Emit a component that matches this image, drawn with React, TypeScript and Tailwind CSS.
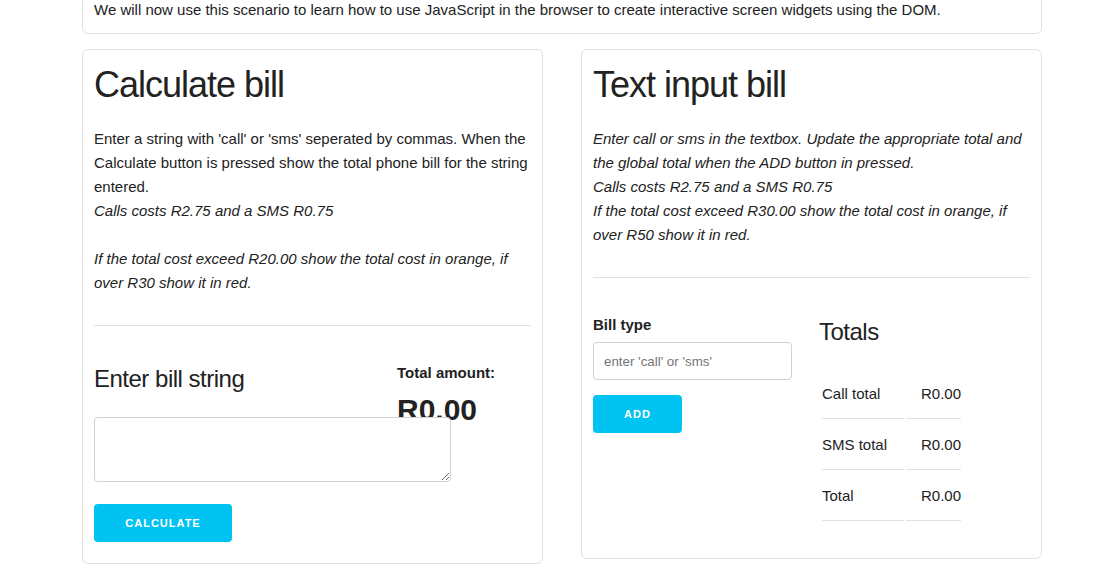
import React from "react";

function PrimaryButton({ label, width }: { label: string; width: string }) {
  return (
    <button
      type="button"
      className={`${width} h-[38px] rounded-[4px] bg-[#00c3f2] text-white text-[11px] font-bold uppercase tracking-[1px] leading-[38px] text-center`}
    >
      {label}
    </button>
  );
}

export default function App() {
  return (
    <div className="min-h-screen bg-white text-[15px] leading-[24px] text-[#222] font-['Liberation_Sans',Arial,sans-serif] overflow-hidden">
      <div className="ml-[82px] w-[960px] -mt-[14px]">
        <div className="border border-[#e1e1e1] rounded-[6px] px-[11px] py-[11px]">
          <p>
            We will now use this scenario to learn how to use JavaScript in the browser to create interactive screen widgets using the DOM.
          </p>
        </div>

        <div className="mt-[15px] flex items-start gap-[38px]">
          {/* Left card */}
          <div className="w-[461px] border border-[#e1e1e1] rounded-[6px] px-[11px] pt-[12px] pb-[21px]">
            <h2 className="text-[36px] leading-[45px] tracking-[-1px] mb-[20px]">Calculate bill</h2>
            <p>
              Enter a string with 'call' or 'sms' seperated by commas. When the Calculate button is pressed show the total phone bill for the string entered.
              <br />
              <em>Calls costs R2.75 and a SMS R0.75</em>
              <br />
              <br />
              <em>If the total cost exceed R20.00 show the total cost in orange, if over R30 show it in red.</em>
            </p>
            <hr className="border-0 border-t border-[#e1e1e1] mt-[30px] mb-[35px]" />
            <div className="flex h-[32px]">
              <div className="w-[285px] pt-[2px]">
                <h4 className="text-[24px] leading-[32px] tracking-[-0.5px]">Enter bill string</h4>
              </div>
              <div className="ml-[18px] w-[133px]">
                <div className="font-bold mb-[5px]">Total amount:</div>
                <div className="text-[30px] leading-[39px] font-bold">R0.00</div>
              </div>
            </div>
            <textarea className="relative z-10 block mt-[24px] w-[357px] h-[65px] bg-white border border-[#d1d1d1] rounded-[4px] px-[10px] py-[6px] outline-none" />
            <div className="mt-[22px]">
              <PrimaryButton label="Calculate" width="w-[138px]" />
            </div>
          </div>

          {/* Right card */}
          <div className="w-[461px] border border-[#e1e1e1] rounded-[6px] px-[11px] pt-[12px] pb-[11px]">
            <h2 className="text-[36px] leading-[45px] tracking-[-1px] mb-[20px]">Text input bill</h2>
            <p className="italic">
              Enter call or sms in the textbox. Update the appropriate total and the global total when the ADD button in pressed.
              <br />
              Calls costs R2.75 and a SMS R0.75
              <br />
              If the total cost exceed R30.00 show the total cost in orange, if over R50 show it in red.
            </p>
            <hr className="border-0 border-t border-[#e1e1e1] mt-[30px] mb-[35px]" />
            <div className="flex">
              <div className="w-[209px]">
                <label className="block font-bold mb-[5px]">Bill type</label>
                <input
                  type="text"
                  placeholder="enter 'call' or 'sms'"
                  className="block w-[199px] h-[38px] border border-[#d1d1d1] rounded-[4px] px-[10px] text-[13.33px] placeholder:text-[#757575] outline-none mb-[15px]"
                />
                <PrimaryButton label="Add" width="w-[89px]" />
              </div>
              <div className="ml-[18px] w-[210px] pt-[3px]">
                <h4 className="-ml-[1px] text-[24px] leading-[32px] tracking-[-0.5px] mb-[20px]">Totals</h4>
                <table className="border-separate border-spacing-[2px] mt-[2px] mb-[24px]">
                  <tbody>
                    {[
                      ["Call total", "R0.00"],
                      ["SMS total", "R0.00"],
                      ["Total", "R0.00"],
                    ].map(([k, v]) => (
                      <tr key={k}>
                        <td className="pl-0 pr-[17px] py-[12px] border-b border-[#e1e1e1] text-left">{k}</td>
                        <td className="pl-[15px] pr-0 py-[12px] border-b border-[#e1e1e1] text-left">{v}</td>
                      </tr>
                    ))}
                  </tbody>
                </table>
              </div>
            </div>
          </div>
        </div>
      </div>
    </div>
  );
}
